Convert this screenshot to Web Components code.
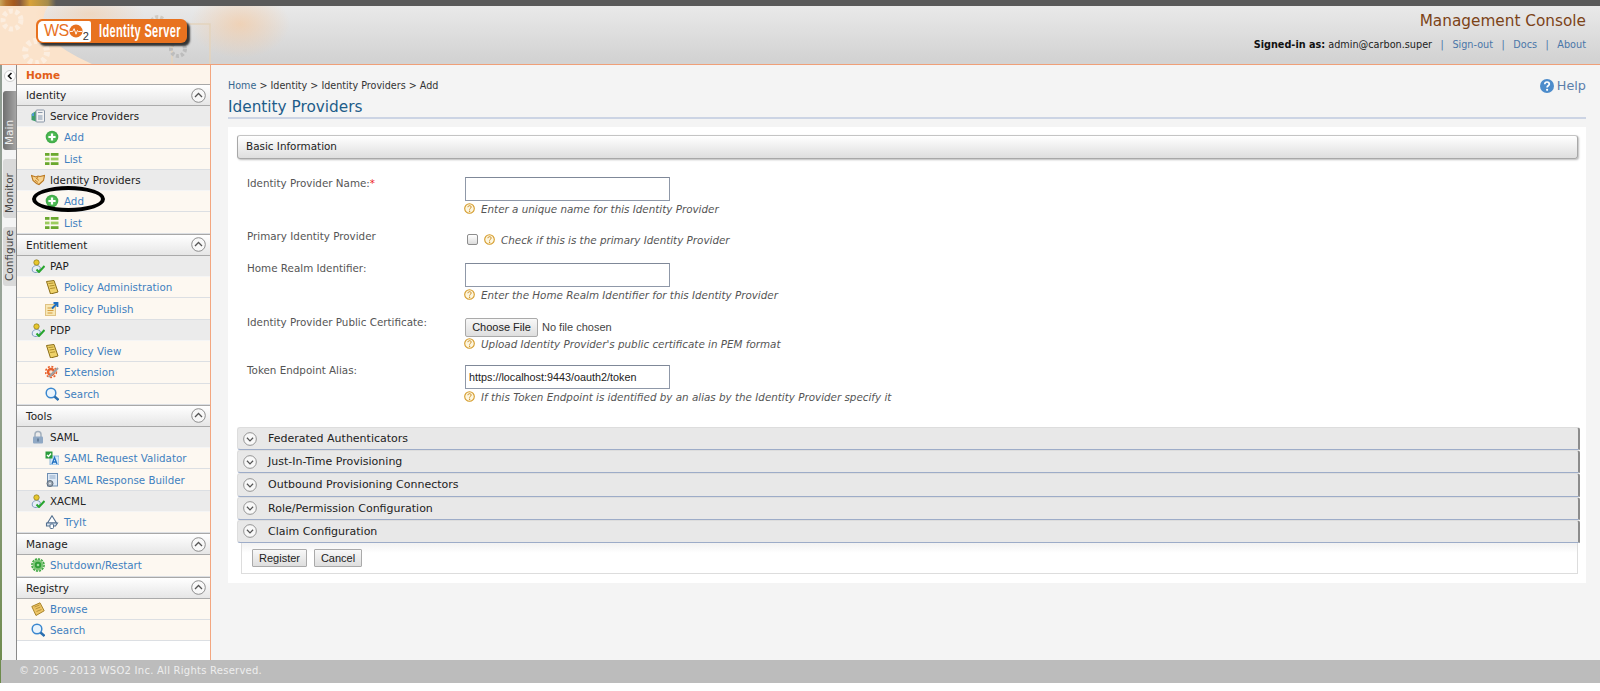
<!DOCTYPE html>
<html><head><meta charset="utf-8">
<style>
html,body{margin:0;padding:0;background:#fff;}
body{font:11px "DejaVu Sans",sans-serif;color:#333;width:1600px;height:691px;overflow:hidden;}
</style></head><body>
<wso-page>
  <wso-header slot="header"></wso-header>
  <wso-tabs slot="tabs"></wso-tabs>
  <wso-menu slot="menu">
    <wso-home>Home</wso-home>
    <wso-head>Identity</wso-head>
    <wso-sub icon="sp">Service Providers</wso-sub>
    <wso-item icon="add">Add</wso-item>
    <wso-item icon="list">List</wso-item>
    <wso-sub icon="shake">Identity Providers</wso-sub>
    <wso-item icon="add">Add</wso-item>
    <wso-item icon="list">List</wso-item>
    <wso-head>Entitlement</wso-head>
    <wso-sub icon="user">PAP</wso-sub>
    <wso-item icon="policy">Policy Administration</wso-item>
    <wso-item icon="publish">Policy Publish</wso-item>
    <wso-sub icon="user">PDP</wso-sub>
    <wso-item icon="policy">Policy View</wso-item>
    <wso-item icon="ext">Extension</wso-item>
    <wso-item icon="search">Search</wso-item>
    <wso-head>Tools</wso-head>
    <wso-sub icon="lock">SAML</wso-sub>
    <wso-item icon="valid">SAML Request Validator</wso-item>
    <wso-item icon="build">SAML Response Builder</wso-item>
    <wso-sub icon="user">XACML</wso-sub>
    <wso-item icon="rocket">TryIt</wso-item>
    <wso-head>Manage</wso-head>
    <wso-item icon="power" level="1">Shutdown/Restart</wso-item>
    <wso-head>Registry</wso-head>
    <wso-item icon="book" level="1">Browse</wso-item>
    <wso-item icon="search" level="1">Search</wso-item>
    <wso-oval></wso-oval>
  </wso-menu>
  <wso-content slot="content">
    <wso-panel-bar>Basic Information</wso-panel-bar>
    <wso-row label="Identity Provider Name:" req="1" top="17" off="1" kind="text" hint="Enter a unique name for this Identity Provider"></wso-row>
    <wso-row label="Primary Identity Provider" top="13" off="0" kind="check" hint="Check if this is the primary Identity Provider"></wso-row>
    <wso-row label="Home Realm Identifier:" top="13" off="2" kind="text" hint="Enter the Home Realm Identifier for this Identity Provider"></wso-row>
    <wso-row label="Identity Provider Public Certificate:" top="13" off="3" kind="file" hint="Upload Identity Provider's public certificate in PEM format"></wso-row>
    <wso-row label="Token Endpoint Alias:" top="12" off="2" kind="text" value="https://localhost:9443/oauth2/token" hint="If this Token Endpoint is identified by an alias by the Identity Provider specify it"></wso-row>
    <wso-bars>
      <wso-bar>Federated Authenticators</wso-bar>
      <wso-bar>Just-In-Time Provisioning</wso-bar>
      <wso-bar>Outbound Provisioning Connectors</wso-bar>
      <wso-bar>Role/Permission Configuration</wso-bar>
      <wso-bar>Claim Configuration</wso-bar>
    </wso-bars>
    <wso-actions></wso-actions>
  </wso-content>
  <wso-footer slot="footer">© 2005 - 2013 WSO2 Inc. All Rights Reserved.</wso-footer>
</wso-page>
<script>
const ICONS={
add:`<circle cx="7" cy="7" r="6.3" fill="#43ad4b"/><circle cx="7" cy="7" r="4.6" fill="#4fbb55"/><path d="M7 3.4v7.2M3.4 7h7.2" stroke="#fff" stroke-width="2.2"/>`,
list:`<g fill="#6aa82f"><rect x="0" y="1" width="4.5" height="2.8"/><rect x="5.8" y="1" width="7.7" height="2.8"/></g><g fill="#9ccc5e"><rect x="0" y="5.6" width="4.5" height="2.8"/><rect x="5.8" y="5.6" width="7.7" height="2.8"/></g><g fill="#6aa82f"><rect x="0" y="10.2" width="4.5" height="2.8"/><rect x="5.8" y="10.2" width="7.7" height="2.8"/></g>`,
sp:`<path d="M.5 5 5 2v10.5L.5 11z" fill="#3d9e6a"/><path d="M1 5 3 3.5V7H1z" fill="#4f9bd6"/><rect x="5" y="1" width="8.5" height="12" rx="1" fill="#f2f2f2" stroke="#8a97a8"/><rect x="7" y="6" width="4.5" height="5" fill="#b9c3cf"/><path d="M7 3.5h4.5" stroke="#8a97a8"/>`,
shake:`<path d="M.5 2.5 5 4l2-1 2 .5 4.5-1-1 5-4.500 4-2.500-1-3.500-3z" fill="#f6d28f" stroke="#b9771f" stroke-width="1.100"/><path d="M5 5 8 7.500M4 7l3 2.500M7 4 5.500 6" stroke="#c9862c" fill="none"/>`,
user:`<path d="M1.500 12c-1-3 1-5.500 4-5.500 2 0 3.500 1 4 2.500L7 13c-2.500 1-4.500.5-5.500-1z" fill="#e6eef7" stroke="#7f9dc2"/><circle cx="5.500" cy="3.500" r="2.700" fill="#e7c72e" stroke="#8a7a1c" stroke-width=".7"/><path d="M5.500 10.500 8 13 13.500 7" fill="none" stroke="#27a52e" stroke-width="2"/>`,
policy:`<path d="M1.500 1.500 9 .5l4 11.500-7.500 2z" fill="#efd26a" stroke="#8a6d18"/><path d="M3.500 3.500 8.500 3M4.500 6l5-.7M5.200 8.500l5-.7" stroke="#b08f2a"/>`,
publish:`<rect x="0.500" y="2.500" width="10" height="11" fill="#f7e7b5" stroke="#e0c283"/><path d="M2.500 6h6M2.500 8.500h6M2.500 11h5" stroke="#d59b3d"/><path d="M7 6.500 12 1.500M8.500 1h4v4" stroke="#1f6fc0" stroke-width="1.800" fill="none"/>`,
ext:`<circle cx="6" cy="7" r="4.200" fill="#e8602c"/><circle cx="6" cy="7" r="5.400" fill="none" stroke="#e8602c" stroke-width="1.600" stroke-dasharray="2 1.600"/><circle cx="6" cy="7" r="1.800" fill="#f5e6d8"/><path d="M4 12 13 3" stroke="#9da3a8" stroke-width="2.200"/>`,
search:`<circle cx="6" cy="6" r="4.800" fill="#eaf4fc" stroke="#3a87cf" stroke-width="1.500"/><path d="M9.500 9.500 13.500 13" stroke="#2a6fb0" stroke-width="2.400"/>`,
lock:`<path d="M4 7V4.500a3 3 0 0 1 6 0V7" fill="none" stroke="#a3b0bd" stroke-width="1.500"/><rect x="2" y="6.500" width="10" height="7" rx="1" fill="#8fa8c4"/><rect x="6.300" y="8.500" width="1.400" height="3" fill="#56708c"/>`,
valid:`<rect x="5" y="5" width="9" height="9" fill="#d7e9f8" stroke="#4e93d1" stroke-width=".6"/><path d="M7 13 9.500 6.500 12 13M8 11h3" stroke="#1f6fc0" stroke-width="1.300" fill="none"/><rect x="0.500" y="0.500" width="7" height="7" fill="#2a9c3c"/><path d="M2 4l1.500 1.500L6 2.500" stroke="#fff" stroke-width="1.300" fill="none"/>`,
build:`<rect x="2.500" y="0.500" width="10" height="12.500" fill="#dfeaf6" stroke="#6f8fb3"/><path d="M4.500 3h6M4.500 5h6" stroke="#8fa9c7"/><circle cx="5" cy="10.500" r="3" fill="#9ba6b2" stroke="#5d6b7a"/><circle cx="5" cy="10.500" r="1" fill="#e8edf2"/>`,
rocket:`<path d="M7 .8 11.500 8H2.500z" fill="#fff" stroke="#54708f" stroke-width="1.100"/><path d="M1.500 8h11l-2 3h-9z" fill="#dbe6f2" stroke="#54708f" stroke-width="1.100"/><rect x="5" y="9" width="3.500" height="4.500" rx="1" fill="#fff" stroke="#54708f"/>`,
power:`<circle cx="7" cy="7" r="5.400" fill="#7cc576"/><circle cx="7" cy="7" r="6.100" fill="none" stroke="#3ba63f" stroke-width="1.500" stroke-dasharray="2.200 .9"/><circle cx="7" cy="7" r="3.200" fill="#2f9e36"/><circle cx="7" cy="7" r="1.300" fill="#a3dca0"/>`,
book:`<path d="M.8 4.500 9 .8l4.200 8L5 13.500z" fill="#eec566" stroke="#a8842c"/><path d="M3.500 5 8.500 3M4.500 7l5-2M5.500 9.500l5-2" stroke="#b9933a"/>`
};
function icon(n,s){return `<svg width="${s||14}" height="${s||14}" viewBox="0 0 14 14" aria-hidden="true" style="display:block;flex:none">${ICONS[n]||''}</svg>`}
function def(name,html,init){customElements.define(name,class extends HTMLElement{
  connectedCallback(){ if(this.shadowRoot)return; const r=this.attachShadow({mode:'open'}); r.innerHTML=typeof html==='function'?html(this):html; if(init)init(r,this);}
});}
const chev=(up)=>`<svg width="15" height="15" viewBox="0 0 15 15" style="display:block;flex:none"><circle cx="7.500" cy="7.500" r="6.800" fill="#f8f8f8" stroke="#8d8d8d"/><path d="${up?'M4 9 7.500 5.500 11 9':'M4.200 6.200 7.500 9.500 10.800 6.200'}" fill="none" stroke="#555" stroke-width="1.300"/></svg>`;

def('wso-page',`<style>
:host{display:grid;grid-template-columns:2px 15px 194px 1fr;grid-template-rows:65px 595px 23px 8px;width:1600px;height:691px;}
.edge{grid-column:1;grid-row:1/4;background:linear-gradient(#8d9a90,#9aa69a 50%,#6c8a4a);}
::slotted([slot=header]){grid-column:2/5;grid-row:1}
::slotted([slot=tabs]){grid-column:2;grid-row:2}
::slotted([slot=menu]){grid-column:3;grid-row:2}
::slotted([slot=content]){grid-column:4;grid-row:2}
::slotted([slot=footer]){grid-column:2/5;grid-row:3}
</style><div class="edge"></div><slot name="header"></slot><slot name="tabs"></slot><slot name="menu"></slot><slot name="content"></slot><slot name="footer"></slot>`);

def('wso-header',`<style>
:host{display:flex;flex-direction:column;position:relative;box-sizing:border-box;height:65px;overflow:hidden;margin-left:-2px;
 background:linear-gradient(#ececec,#d3d3d3 92%);border-bottom:1.500px solid #ef9f78;}
.top{height:6px;background:linear-gradient(90deg,#c9a55a 0,#b7752e 6px,#a5591e 14px,#8a5a3a 20px,#d8a23a 30px,#a58b4a 48px,#5a5a5a 56px);flex:none;position:relative;z-index:2}
.deco{position:absolute;left:0;top:6px;z-index:0}
.logo{position:absolute;left:36px;top:19px;width:151px;height:24px;background:#e8721f;border-radius:6px;display:flex;align-items:center;box-shadow:3px 3px 2px #333;z-index:1;box-sizing:border-box;padding:1.500px 2px;overflow:hidden}
.w{width:53px;height:100%;background:#fff;border-radius:5px 2px 2px 5px;display:flex;align-items:center;padding-left:6px;box-sizing:border-box;font:16px "Liberation Sans",sans-serif;color:#e8721f;letter-spacing:-.5px;flex:none}
.w i{font:normal 11px "Liberation Sans",sans-serif;color:#333;align-self:flex-end;}
.n{font:bold 19px "Liberation Sans",sans-serif;color:#fff;margin-left:8px;white-space:nowrap;transform:scaleX(.58);transform-origin:0 50%;letter-spacing:.6px;flex:none}
.r{position:relative;z-index:1;display:flex;flex-direction:column;align-items:flex-end;padding:6px 14px 0 0}
h1{font:normal 15.300px/18px "DejaVu Sans",sans-serif;color:#7c4317;margin:0;}
.l{font-size:9.700px;line-height:14px;margin-top:8px;color:#222;white-space:pre}
.l b{color:#111}.l a{color:#4a76a8}.l s{text-decoration:none;color:#4a76a8;margin:0 8.500px}
</style><div class="top"></div>
<svg class="deco" width="300" height="58" viewBox="0 0 300 58">
<defs><radialGradient id="a" cx=".5" cy=".5" r=".5"><stop offset="0" stop-color="#f7c79a" stop-opacity=".6"/><stop offset="1" stop-color="#f7c79a" stop-opacity="0"/></radialGradient></defs>
<path d="M0 0H48C34 22 52 40 92 58H0z" fill="#fbe3cb"/>
<ellipse cx="240" cy="18" rx="50" ry="34" fill="url(#a)"/>
<ellipse cx="90" cy="8" rx="55" ry="20" fill="url(#a)" opacity=".8"/>
<circle cx="12" cy="14" r="9" fill="none" stroke="#fff" stroke-width="5" stroke-dasharray="4 2.500" opacity=".4"/>
<circle cx="36" cy="46" r="11" fill="none" stroke="#fff" stroke-width="6" stroke-dasharray="4 3" opacity=".4"/>
<rect x="172" y="18" width="38" height="50" fill="none" stroke="#e3d3bd" stroke-width="1.500"/>
<circle cx="158" cy="18" r="7" fill="none" stroke="#cfcac2" stroke-width="4" stroke-dasharray="3 2"/>
<circle cx="178" cy="43" r="7" fill="none" stroke="#bdbdbd" stroke-width="4" stroke-dasharray="3 2"/>
</svg>
<div class="logo"><div class="w">WS<svg width="14" height="14" viewBox="0 0 15 15"><circle cx="7.500" cy="7.500" r="7" fill="#e8721f"/><path d="M1 8h3l1.500-3 2 6 1.500-4 1 1h4" fill="none" stroke="#fff" stroke-width="1"/></svg><i>2</i></div><div class="n">Identity Server</div></div>
<div class="r"><h1>Management Console</h1><div class="l"><b>Signed-in as:</b> admin@carbon.super<s>|</s><a>Sign-out</a><s>|</s><a>Docs</a><s>|</s><a>About</a></div></div>`);

def('wso-tabs',`<style>
:host{display:flex;flex-direction:column;align-items:flex-start;background:#f4f4f4;box-sizing:border-box;border-right:1.500px solid #8a8a8a;}
.c{width:12px;height:12px;border-radius:50%;background:#fff;border:1px solid #ccc;display:flex;margin:5px 0 0 2px;box-sizing:border-box;align-items:center;justify-content:center}
.t{writing-mode:vertical-rl;transform:rotate(180deg);width:13px;height:59px;box-sizing:border-box;padding:5px 0 0;font-size:10.500px;line-height:13px;border-radius:0 3px 3px 0;margin-left:1px;white-space:nowrap}
.m{background:linear-gradient(270deg,#707070,#a4a4a4);color:#eee;margin-top:9px}
.o{background:#d9d9d9;color:#444;margin-top:9px}
.g{background:#d9d9d9;color:#444;margin-top:9px}
</style>
<div class="c"><svg width="8" height="8" viewBox="0 0 8 8"><path d="M5.500 1 2.500 4 5.500 7" fill="none" stroke="#111" stroke-width="1.600"/></svg></div>
<div class="t m">Main</div><div class="t o">Monitor</div><div class="t g">Configure</div>`);

def('wso-menu',`<style>:host{display:flex;flex-direction:column;background:#fff;box-sizing:border-box;border-right:1.500px solid #f3a67f;position:relative;}</style><slot></slot>`);
def('wso-home',`<style>:host{display:flex;align-items:center;height:19px;padding-left:9px;background:#fdf5ec;color:#e35f19;font-weight:bold;font-size:10.500px}</style><slot></slot>`);
def('wso-head',()=>`<style>:host{display:flex;align-items:center;justify-content:space-between;box-sizing:border-box;height:22px;padding:0 4px 0 9px;background:linear-gradient(#fff,#e6e6e6);border-top:1.500px solid #a8a8a8;border-bottom:1px solid #aaa;color:#222;font-size:10.500px}</style><span><slot></slot></span>${chev(true)}`);
def('wso-sub',(h)=>`<style>:host{display:flex;align-items:center;box-sizing:border-box;height:21.300px;padding-left:14px;background:#ebebeb;color:#222;gap:5px;font-size:10.300px;border-bottom:1px solid #f5f5f5}</style>${icon(h.getAttribute('icon'))}<span><slot></slot></span>`);
def('wso-item',(h)=>`<style>:host{display:flex;align-items:center;box-sizing:border-box;height:21.300px;padding-left:${h.getAttribute('level')?14:28}px;background:#fdf8f1;color:#3f80bf;gap:5px;font-size:10.300px;border-bottom:1px solid #dcdfe3}</style>${icon(h.getAttribute('icon'))}<span><slot></slot></span>`);
def('wso-oval',`<style>:host{position:absolute;left:15px;top:121px;width:73px;height:26px;box-sizing:border-box;border:4px solid #000;border-radius:50%;pointer-events:none;display:block}</style>`);

def('wso-content',`<style>
:host{display:flex;flex-direction:column;background:#f4f4f4;padding:0 14px 0 17px;box-sizing:border-box;min-width:0}
.bc{font-size:9.600px;line-height:14px;margin-top:14px;color:#333;white-space:pre}.bc a{color:#36678f}
.ht{display:flex;justify-content:space-between;align-items:flex-start}
.help{display:flex;align-items:center;gap:3px;color:#5b7eab;font-size:12.800px;line-height:15px;margin-top:13px}
h2{font:normal 15.300px/20px "DejaVu Sans",sans-serif;color:#1d5c89;margin:4px 0 0;border-bottom:2px solid #ccd4e4;height:20px}
.p{background:#fff;margin-top:8px;height:456px;padding:8px 8px 0 9px;box-sizing:border-box;display:flex;flex-direction:column}
</style>
<div class="ht"><div class="bc"><a>Home</a> &gt; Identity &gt; Identity Providers &gt; Add</div>
<div class="help"><svg width="14" height="14" viewBox="0 0 14 14"><circle cx="7" cy="7" r="7" fill="#4d8ccb"/><path d="M4.800 5.300c0-3 4.500-3 4.500-.2 0 1.700-2.200 1.500-2.200 3.300" fill="none" stroke="#fff" stroke-width="1.700"/><circle cx="7.100" cy="10.800" r="1.100" fill="#fff"/></svg><span>Help</span></div></div>
<h2>Identity Providers</h2>
<div class="p"><slot></slot></div>`);

def('wso-panel-bar',`<style>:host{display:block;height:23.500px;box-sizing:border-box;border:1px solid #a8a8a8;border-top-color:#c4c4c4;border-radius:3px;background:linear-gradient(#fff,#dedede);box-shadow:1px 1px 2px #bbb;padding-left:8px;line-height:20px;font-size:10.400px;color:#222;flex:none}</style><slot></slot>`);

const qicon=`<svg width="11" height="11" viewBox="0 0 11 11" style="flex:none;display:block"><circle cx="5.500" cy="5.500" r="4.800" fill="#fdf6df" stroke="#d49a28" stroke-width="1.100"/><path d="M3.900 4.200c0-2 3.300-2 3.300-.1 0 1.200-1.600 1.100-1.600 2.500" fill="none" stroke="#c98a1e" stroke-width="1"/><circle cx="5.600" cy="8.200" r=".7" fill="#c98a1e"/></svg>`;
def('wso-row',(h)=>{
 const kind=h.getAttribute('kind'),off=+h.getAttribute('off'),v=h.getAttribute('value')||'';
 const hint=`<div class="h">${qicon}<em>${h.getAttribute('hint')}</em></div>`;
 let ctl='';
 if(kind==='text')ctl=`<input type="text" value="${v}">`+hint;
 if(kind==='file')ctl=`<div class="f"><button>Choose File</button><span>No file chosen</span></div>`+hint;
 if(kind==='check')ctl=`<div class="h k"><input type="checkbox">${qicon}<em>${h.getAttribute('hint')}</em></div>`;
 return `<style>
 :host{display:grid;grid-template-columns:218px 1fr;padding:${h.getAttribute('top')}px 0 0 10px;flex:none}
 label{line-height:14px;font-size:10.350px;color:#555}
 label b{color:#e22;font-weight:normal}
 .c{padding-top:${off}px;min-width:0}
 input[type=text]{display:block;width:204.500px;height:24px;box-sizing:border-box;margin:0;border:1px solid #8f98a8;border-top-color:#7f8898;background:#fff;padding:0 3px;font:10.800px "Liberation Sans",sans-serif;color:#222;border-radius:0;outline:0}
 .h{display:flex;align-items:center;gap:6px;height:14px;margin-top:1px;font-size:10.350px;color:#555;margin-left:-1px;white-space:nowrap}
 .h em{font-style:italic}
 .k{margin-top:3px;height:16px;margin-left:2px;gap:0}
 .k input{margin:0;width:11px;height:11px;appearance:none;border:1px solid #8d8d8d;border-radius:2px;background:linear-gradient(#fff,#dcdcdc);margin-right:6px}
 .k svg{margin-right:6px}
 .f{display:flex;align-items:center;gap:4px;height:19px;font:11px "Liberation Sans",sans-serif;color:#444}
 button{height:19px;width:73px;padding:0;margin:0;font:11px "Liberation Sans",sans-serif;color:#222;border:1px solid #aaa;border-radius:2px;background:linear-gradient(#f8f8f8,#dedede);}
 .f + .h{margin-top:0}
 </style><label>${h.getAttribute('label')}${h.getAttribute('req')?'<b>*</b>':''}</label><div class="c">${ctl}</div>`;
});

def('wso-bars',`<style>:host{display:flex;flex-direction:column;margin-top:23.500px;flex:none}</style><slot></slot>`);
def('wso-bar',()=>`<style>:host{display:flex;align-items:center;height:23.200px;box-sizing:border-box;background:#e8e8e8;border:1px solid #ddd;border-bottom:1.500px solid #9dacc8;border-right:2px solid #8c8c8c;border-radius:3px 3px 0 3px;padding-left:5px;gap:11px;font-size:11px;color:#222;margin-right:-2px}</style>${chev(false).replace(/width="15" height="15"/,'width="14" height="14"')}<span><slot></slot></span>`);
def('wso-actions',`<style>:host{display:flex;gap:7px;height:31px;box-sizing:border-box;margin-left:4px;border:1px solid #ddd;border-top:0;padding:6.500px 0 0 10px;background:linear-gradient(#f2f2f2,#fff 10px);flex:none}
button{height:18px;padding:0;font:11px "Liberation Sans",sans-serif;color:#222;border:1px solid #aaa;border-radius:1px;background:linear-gradient(#f8f8f8,#dedede);box-sizing:border-box}
.a{width:55px}.b{width:48px}</style><button class="a">Register</button><button class="b">Cancel</button>`);
def('wso-footer',`<style>:host{display:block;background:#bcbcbc;color:#eee;font-size:10px;line-height:22px;padding-left:18px;letter-spacing:.25px;margin-left:-1px}</style><slot></slot>`);
</script>
</body></html>
